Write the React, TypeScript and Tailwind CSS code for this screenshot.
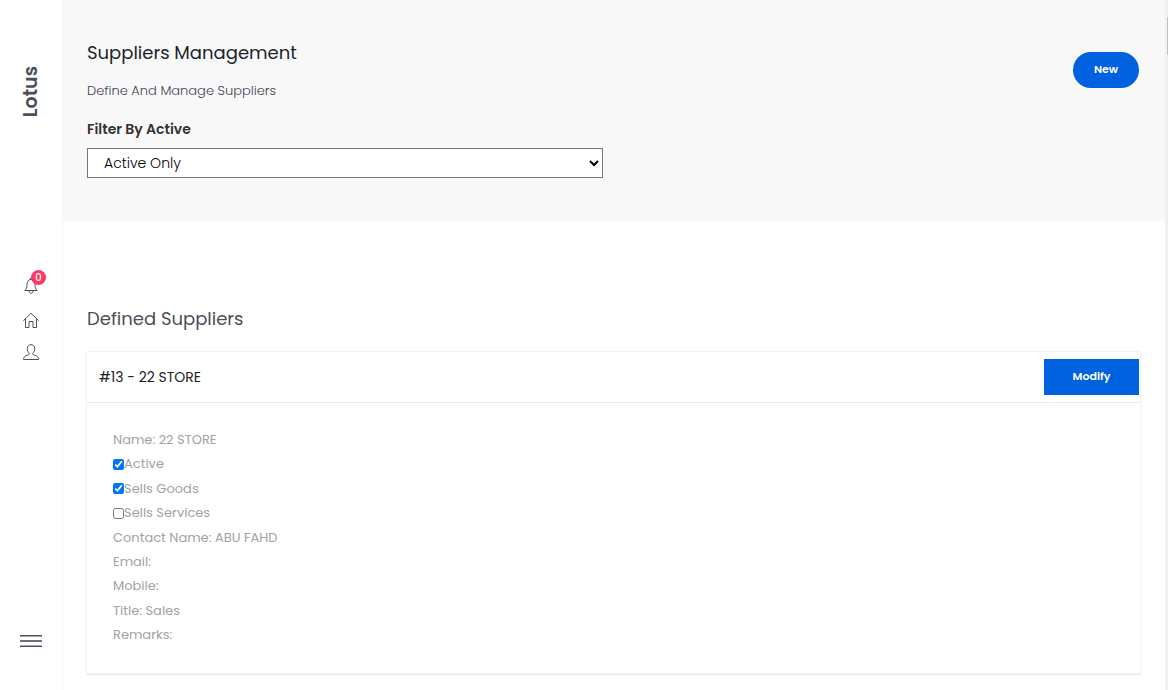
import React, { useState } from 'react';

type Supplier = {
  id: number;
  name: string;
  active: boolean;
  goods: boolean;
  services: boolean;
  contactName: string;
  email: string;
  mobile: string;
  title: string;
  remarks: string;
};

const suppliers: Supplier[] = [
  {
    id: 13,
    name: '22 STORE',
    active: true,
    goods: true,
    services: false,
    contactName: 'ABU FAHD',
    email: '',
    mobile: '',
    title: 'Sales',
    remarks: '',
  },
];

function BellIcon() {
  return (
    <svg width="16" height="18" viewBox="0 0 16 18" fill="none" stroke="#4b5060" strokeWidth="1">
      <path d="M6.8 2.5a1.2 1.2 0 0 1 2.4 0M1.8 13.5c1.9-1.7 2.2-3.6 2.2-6 0-3.2 1.5-5 4-5s4 1.8 4 5c0 2.4.3 4.3 2.2 6z" strokeLinejoin="round" />
      <path d="M6 14c0 1.3.8 2.2 2 2.2s2-.9 2-2.2" />
    </svg>
  );
}

function HomeIcon() {
  return (
    <svg width="16" height="16" viewBox="0 0 16 16" fill="none" stroke="#4b5060" strokeWidth="1">
      <path d="M.6 8.5 8 1.2l7.4 7.3" strokeLinecap="round" />
      <path d="M2.5 7v8.5h3.5V9.5h4v6h3.5V7" />
    </svg>
  );
}

function UserIcon() {
  return (
    <svg width="16" height="16" viewBox="0 0 16 16" fill="none" stroke="#4b5060" strokeWidth="1">
      <path
        d="M6.2 9.2C4.9 8.3 4.3 6.7 4.3 4.8 4.3 2.2 5.7.7 8 .7s3.7 1.5 3.7 4.1c0 1.9-.6 3.5-1.9 4.4-.2 1.5.5 1.7 2 2.1 2.4.7 3.6 1.500 3.600 4.200H.6c0-2.700 1.200-3.500 3.600-4.200 1.500-.4 2.200-.6 2-2.100z"
        strokeLinejoin="round"
      />
    </svg>
  );
}

function Sidebar() {
  return (
    <aside className="flex w-[63px] shrink-0 flex-col items-center border-r border-[#f6f6f6] bg-white pt-[66px] pb-10">
      <a
        href="#"
        className="rotate-180 text-[19px] leading-4 font-semibold text-[#4b4f5c] [writing-mode:vertical-rl]"
      >
        Lotus
      </a>
      <nav className="mt-40 flex flex-col items-center gap-4">
        <a href="#notifications" aria-label="Notifications" className="relative">
          <BellIcon />
          <span className="absolute -top-[7px] left-2 flex size-[15px] items-center justify-center rounded-full bg-[#ff3860] text-[10px] font-medium text-white">
            0
          </span>
        </a>
        <a href="#home" aria-label="Home" className="mt-px">
          <HomeIcon />
        </a>
        <a href="#profile" aria-label="Profile">
          <UserIcon />
        </a>
      </nav>
      <button type="button" aria-label="Menu" className="mt-auto">
        <svg width="22" height="18" viewBox="0 0 22 18" fill="#4b5060">
          <rect y="3" width="22" height="1.5" />
          <rect y="8.2" width="22" height="1.6" />
          <rect y="13.500" width="22" height="1.500" />
        </svg>
      </button>
    </aside>
  );
}

function Flag({ label, checked }: { label: string; checked: boolean }) {
  const [value, setValue] = useState(checked);

  return (
    <label className="flex items-center">
      <input
        type="checkbox"
        checked={value}
        onChange={(e) => setValue(e.target.checked)}
        className="size-[11px] accent-[#0075ff]"
      />
      {label}
    </label>
  );
}

function SupplierCard({ supplier }: { supplier: Supplier }) {
  return (
    <article className="border border-[#f3f3f3] shadow-[0_1px_1px_#ececec]">
      <div className="flex items-center justify-between border-b border-[#ececec] py-[7px] pr-px pl-3">
        <h3 className="text-sm text-[#222]">
          #{supplier.id} - {supplier.name}
        </h3>
        <button
          type="button"
          className="h-9 w-[95px] bg-[#0062df] pb-0.5 text-[11px] font-semibold text-white"
        >
          Modify
        </button>
      </div>
      <div className="px-[26px] pt-[25px] pb-[26px] text-[13px] leading-6 text-[#a2a2a2]">
        <div className="flex min-h-[219px] flex-col justify-between">
          <p>Name: {supplier.name}</p>
          <Flag label="Active" checked={supplier.active} />
          <Flag label="Sells Goods" checked={supplier.goods} />
          <Flag label="Sells Services" checked={supplier.services} />
          <p>Contact Name: {supplier.contactName}</p>
          <p>Email: {supplier.email}</p>
          <p>Mobile: {supplier.mobile}</p>
          <p>Title: {supplier.title}</p>
          <p>Remarks: {supplier.remarks}</p>
        </div>
      </div>
    </article>
  );
}

export default function App() {
  const [filter, setFilter] = useState('active');

  return (
    <div className="flex min-h-screen bg-white font-[Poppins,Inter,sans-serif]">
      <Sidebar />
      <main className="min-w-0 flex-1">
        <header className="flex items-start justify-between bg-[#f8f8f8] pt-[41px] pr-[26px] pb-[43px] pl-6">
          <div className="w-1/2 max-w-[516px] min-w-[240px] grow">
            <h1 className="text-lg leading-6 text-[#20242c]">Suppliers Management</h1>
            <p className="mt-4 text-[13px] leading-5 font-light text-[#3f4454]">Define And Manage Suppliers</p>
            <label htmlFor="filter" className="mt-[18px] block text-sm leading-5 font-semibold text-[#333]">
              Filter By Active
            </label>
            <select
              id="filter"
              value={filter}
              onChange={(e) => setFilter(e.target.value)}
              className="mt-[9px] h-[30px] w-full border border-[#767676] bg-white pl-3 text-sm font-light text-black"
            >
              <option value="active">Active Only</option>
              <option value="inactive">Inactive Only</option>
              <option value="all">All</option>
            </select>
          </div>
          <button
            type="button"
            className="mt-[11px] h-9 w-[66px] rounded-full bg-[#0062df] pb-0.5 text-[11px] font-semibold text-white"
          >
            New
          </button>
        </header>
        <section className="pt-[86px] pr-6 pb-4 pl-[23px]">
          <h2 className="mb-5 pl-px text-lg leading-6 text-[#4b4f58]">Defined Suppliers</h2>
          {suppliers.map((s) => (
            <SupplierCard key={s.id} supplier={s} />
          ))}
        </section>
      </main>
      <div className="flex w-[3px] shrink-0 justify-end bg-[#f0f0f0] pt-[17px]">
        <div className="h-[38px] w-px bg-[#c1c1c1]" />
      </div>
    </div>
  );
}
